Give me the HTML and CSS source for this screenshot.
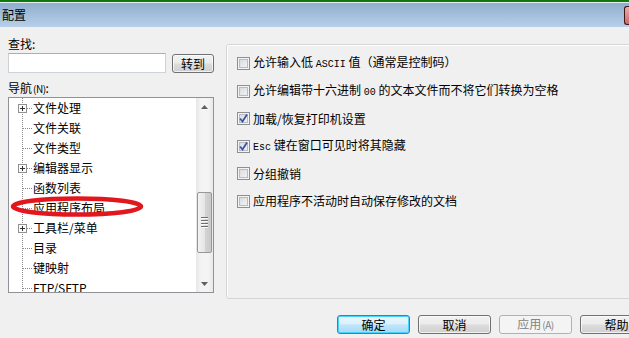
FILE: index.html
```html
<!DOCTYPE html>
<html lang="zh-CN">
<head>
<meta charset="utf-8">
<title>配置</title>
<link rel="stylesheet" href="styles.css">
</head>
<body>
<div class="window">
  <div class="topline"></div>
  <div class="titlebar"><span class="title">配置</span><span class="closebtn"></span></div>
  <div class="main">
    <div class="left">
      <div class="label">查找:</div>
      <div class="findrow">
        <input class="find" type="text">
        <button class="btn go">转到</button>
      </div>
      <div class="label nav">导航<span class="acc">(N)</span>:</div>
      <div class="tree">
        <div class="tree-list">
          <div class="node"><svg class="gut" width="24" height="20"><line x1="13.5" y1="0" x2="13.5" y2="20" class="dot"/><line x1="18" y1="10.5" x2="23" y2="10.5" class="dot"/><rect x="9.5" y="6.5" width="8" height="8" class="pbox"/><line x1="11" y1="10.5" x2="16" y2="10.5" class="plus"/><line x1="13.5" y1="8" x2="13.5" y2="13" class="plus"/></svg><span class="txt">文件处理</span></div>
          <div class="node"><svg class="gut" width="24" height="20"><line x1="13.5" y1="0" x2="13.5" y2="20" class="dot"/><line x1="14" y1="10.5" x2="23" y2="10.5" class="dot"/></svg><span class="txt">文件关联</span></div>
          <div class="node"><svg class="gut" width="24" height="20"><line x1="13.5" y1="0" x2="13.5" y2="20" class="dot"/><line x1="14" y1="10.5" x2="23" y2="10.5" class="dot"/></svg><span class="txt">文件类型</span></div>
          <div class="node"><svg class="gut" width="24" height="20"><line x1="13.5" y1="0" x2="13.5" y2="20" class="dot"/><line x1="18" y1="10.5" x2="23" y2="10.5" class="dot"/><rect x="9.5" y="6.5" width="8" height="8" class="pbox"/><line x1="11" y1="10.5" x2="16" y2="10.5" class="plus"/><line x1="13.5" y1="8" x2="13.5" y2="13" class="plus"/></svg><span class="txt">编辑器显示</span></div>
          <div class="node"><svg class="gut" width="24" height="20"><line x1="13.5" y1="0" x2="13.5" y2="20" class="dot"/><line x1="14" y1="10.5" x2="23" y2="10.5" class="dot"/></svg><span class="txt">函数列表</span></div>
          <div class="node"><svg class="gut" width="24" height="20"><line x1="13.5" y1="0" x2="13.5" y2="20" class="dot"/><line x1="14" y1="10.5" x2="23" y2="10.5" class="dot"/></svg><span class="txt">应用程序布局</span></div>
          <div class="node"><svg class="gut" width="24" height="20"><line x1="13.5" y1="0" x2="13.5" y2="20" class="dot"/><line x1="18" y1="10.5" x2="23" y2="10.5" class="dot"/><rect x="9.5" y="6.5" width="8" height="8" class="pbox"/><line x1="11" y1="10.5" x2="16" y2="10.5" class="plus"/><line x1="13.5" y1="8" x2="13.5" y2="13" class="plus"/></svg><span class="txt">工具栏/菜单</span></div>
          <div class="node"><svg class="gut" width="24" height="20"><line x1="13.5" y1="0" x2="13.5" y2="20" class="dot"/><line x1="14" y1="10.5" x2="23" y2="10.5" class="dot"/></svg><span class="txt">目录</span></div>
          <div class="node"><svg class="gut" width="24" height="20"><line x1="13.5" y1="0" x2="13.5" y2="20" class="dot"/><line x1="14" y1="10.5" x2="23" y2="10.5" class="dot"/></svg><span class="txt">键映射</span></div>
          <div class="node"><svg class="gut" width="24" height="20"><line x1="13.5" y1="0" x2="13.5" y2="20" class="dot"/><line x1="14" y1="10.5" x2="23" y2="10.5" class="dot"/></svg><span class="txt">FTP/SFTP</span></div>
        </div>
        <div class="scrollbar">
          <div class="arrow"><svg width="7" height="4"><path d="M3.5 0 L7 4 L0 4 Z" fill="#606060"/></svg></div>
          <div class="track">
            <div class="thumb"><span class="grip"></span><span class="grip"></span><span class="grip"></span><span class="grip"></span></div>
          </div>
          <div class="arrow"><svg width="7" height="4"><path d="M0 0 L7 0 L3.5 4 Z" fill="#606060"/></svg></div>
        </div>
        <svg class="mark" width="136" height="22"><ellipse cx="67" cy="10.5" rx="64" ry="8" fill="none" stroke="#e3151d" stroke-width="4.5"/></svg>
      </div>
    </div>
    <div class="group">
      <div class="opt"><span class="cb"></span><span class="otxt">允许输入低 <span class="mono">ASCII</span> 值（通常是控制码）</span></div>
      <div class="opt"><span class="cb"></span><span class="otxt">允许编辑带十六进制 <span class="mono">00</span> 的文本文件而不将它们转换为空格</span></div>
      <div class="opt"><span class="cb"><svg class="tick" width="11" height="11"><path d="M2 5.5 L4.5 8.5 L9 1.5" fill="none" stroke="#3a55a0" stroke-width="1.8"/></svg></span><span class="otxt">加载/恢复打印机设置</span></div>
      <div class="opt"><span class="cb"><svg class="tick" width="11" height="11"><path d="M2 5.5 L4.5 8.5 L9 1.5" fill="none" stroke="#3a55a0" stroke-width="1.8"/></svg></span><span class="otxt"><span class="mono">Esc</span> 键在窗口可见时将其隐藏</span></div>
      <div class="opt"><span class="cb"></span><span class="otxt">分组撤销</span></div>
      <div class="opt"><span class="cb"></span><span class="otxt">应用程序不活动时自动保存修改的文档</span></div>
    </div>
  </div>
  <div class="buttons">
    <button class="btn wide default">确定</button>
    <button class="btn wide">取消</button>
    <button class="btn wide disabled">应用<span class="acc">(A)</span></button>
    <button class="btn wide">帮助</button>
  </div>
</div>
</body>
</html>
```

FILE: styles.css
```css
html, body {
  margin: 0;
  padding: 0;
}
body {
  width: 629px;
  height: 338px;
  overflow: hidden;
  background: #f0f0f0;
  font-family: "Noto Sans CJK SC", "Liberation Sans", sans-serif;
  font-size: 12px;
  color: #000;
}
.window {
  display: flex;
  flex-direction: column;
  width: 629px;
  height: 338px;
}
.topline {
  height: 2px;
  background: #0b790b;
  border-bottom: 1px solid #e8eef4;
}
.titlebar {
  height: 24px;
  display: flex;
  align-items: center;
  background: linear-gradient(#8eaecd, #b8d0e9);
}
.title {
  padding-left: 2px;
  font-size: 12px;
  line-height: 24px;
}
.closebtn {
  margin-left: auto;
  width: 4px;
  height: 17px;
  border: 1px solid #4a1414;
  border-right: none;
  border-radius: 3px 0 0 3px;
  background: linear-gradient(#e8b0b0, #c66a6a);
}
.main {
  height: 272px;
  display: flex;
  padding-left: 8px;
}
.left {
  width: 206px;
  padding-top: 8px;
  display: flex;
  flex-direction: column;
}
.label {
  height: 18px;
  line-height: 18px;
}
.nav {
  margin-top: 6px;
}
.acc {
  font-size: 10px;
  letter-spacing: -0.5px;
  margin-left: 1px;
}
.findrow {
  display: flex;
  height: 20px;
}
.find {
  box-sizing: border-box;
  width: 158px;
  height: 20px;
  margin: 0;
  border: 1px solid #cdd2d8;
  border-top-color: #abadb3;
  background: #fff;
}
.btn {
  box-sizing: border-box;
  margin: 0;
  padding: 0;
  font-family: "Noto Sans CJK SC", "Liberation Sans", sans-serif;
  font-size: 12px;
  line-height: 16px;
  color: #000;
  border: 1px solid #707070;
  border-radius: 3px;
  background: linear-gradient(#f2f2f2 0%, #ebebeb 48%, #dddddd 52%, #cfcfcf 100%);
  box-shadow: inset 0 0 0 1px rgba(255,255,255,0.7);
}
.go {
  width: 42px;
  height: 19px;
  margin-left: 6px;
  margin-top: 1px;
}
.tree {
  position: relative;
  box-sizing: border-box;
  width: 206px;
  height: 196px;
  border: 1px solid #8f9398;
  background: #fff;
  display: flex;
}
.tree-list {
  flex: 1;
  overflow: hidden;
}
.node {
  height: 20px;
  display: flex;
  align-items: center;
}
.gut {
  flex: none;
  display: block;
}
.dot {
  stroke: #8a8a8a;
  stroke-width: 1;
  stroke-dasharray: 1 1;
}
.pbox {
  fill: #fbfbfb;
  stroke: #909090;
}
.plus {
  stroke: #303030;
  stroke-width: 1;
}
.txt {
  line-height: 20px;
  white-space: nowrap;
}
.scrollbar {
  width: 17px;
  display: flex;
  flex-direction: column;
  background: linear-gradient(90deg, #e6e6e6, #f4f4f4 30%, #f4f4f4 70%, #e9e9e9);
}
.arrow {
  height: 17px;
  display: flex;
  align-items: center;
  justify-content: center;
}
.track {
  flex: 1;
}
.thumb {
  box-sizing: border-box;
  margin: 77px 1px 0 1px;
  height: 61px;
  border: 1px solid #979797;
  border-radius: 2px;
  background: linear-gradient(90deg, #f2f2f2, #e6e6e6 50%, #d3d3d3 55%, #cacaca);
  display: flex;
  flex-direction: column;
  align-items: center;
  justify-content: center;
  gap: 1px;
}
.grip {
  width: 7px;
  height: 1px;
  background: #6e6e6e;
  border-bottom: 1px solid #fafafa;
}
.mark {
  position: absolute;
  left: 1px;
  top: 98px;
}
.group {
  box-sizing: border-box;
  margin-top: 17px;
  margin-left: 12px;
  width: 420px;
  height: 255px;
  flex: none;
  border: 1px solid #d5d5d5;
  border-radius: 3px;
  box-shadow: inset 1px 1px 0 #fff;
  padding: 5px 0 0 10px;
}
.opt {
  height: 27.5px;
  display: flex;
  align-items: center;
}
.cb {
  box-sizing: border-box;
  width: 13px;
  height: 13px;
  flex: none;
  border: 1px solid #8f8f8f;
  background: #f4f4f4;
  box-shadow: inset 0 0 0 1px #f4f4f4, inset 0 0 0 2px #b8bcc2;
  background-image: linear-gradient(135deg, #d3d6da, #f8f8f8);
  position: relative;
}
.tick {
  position: absolute;
  left: 0;
  top: 0;
}
.otxt {
  margin-left: 3px;
  white-space: nowrap;
  line-height: 18px;
}
.mono {
  font-family: "Liberation Mono", monospace;
  font-size: 10px;
}
.buttons {
  display: flex;
  gap: 8px;
  padding-top: 16px;
  padding-left: 337px;
}
.wide {
  flex: none;
  width: 73px;
  height: 19px;
}
.default {
  border-color: #3c7fb1;
  background: linear-gradient(#eaf6fd 0%, #d9f0fc 48%, #bee6fd 52%, #a7d9f5 100%);
  box-shadow: inset 0 0 0 1px #48d2fe;
}
.disabled {
  color: #838383;
  border-color: #adb2b5;
  background: #f4f4f4;
  box-shadow: none;
}
```
